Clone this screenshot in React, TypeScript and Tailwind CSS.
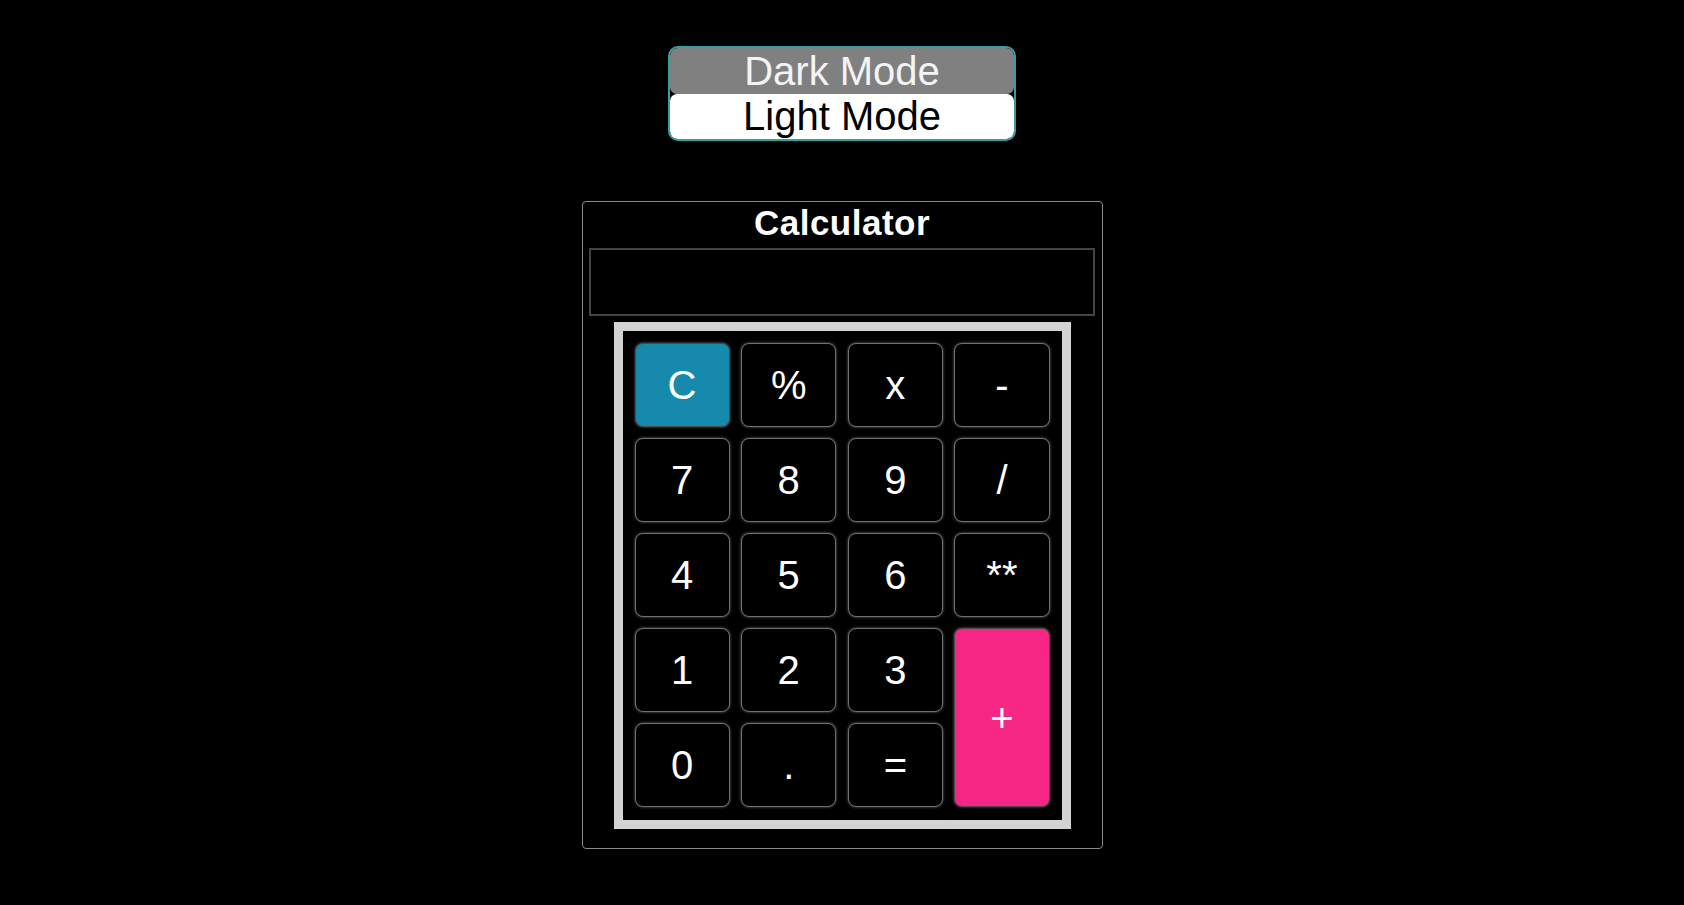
import React from "react";

// Keypad layout, row by row. "+" spans two rows in the last column.
const keys = [
  { label: "C", variant: "clear" },
  { label: "%" },
  { label: "x" },
  { label: "-" },
  { label: "7" },
  { label: "8" },
  { label: "9" },
  { label: "/" },
  { label: "4" },
  { label: "5" },
  { label: "6" },
  { label: "**" },
  { label: "1" },
  { label: "2" },
  { label: "3" },
  { label: "+", variant: "plus" },
  { label: "0" },
  { label: "." },
  { label: "=" },
];

function Key({ label, variant }: { label: string; variant?: string }) {
  const base =
    "flex items-center justify-center rounded-[8px] border-[1.5px] text-[40px] leading-none text-white shadow-[0_0_3px_rgba(170,170,170,0.6)]";
  let color = "bg-black border-[#707070]";
  if (variant === "clear") color = "bg-[#168aad] border-[#4a4a4a]";
  if (variant === "plus") color = "bg-[#f72585] border-[#4a4a4a] row-span-2";
  return <button className={`${base} ${color}`}>{label}</button>;
}

export default function App() {
  return (
    <div
      className="min-h-[905px] bg-black flex flex-col items-center pt-[46px]"
      style={{ fontFamily: '"Liberation Sans", Arial, sans-serif' }}
    >
      {/* theme toggle */}
      <div className="w-[348px] h-[95px] border-2 border-[#34a0a4] rounded-[10px] bg-black flex flex-col overflow-hidden">
        <button className="h-[45.5px] rounded-[7px] bg-[#808080] text-[#f4f4f4] text-[40px] leading-none flex items-center justify-center">
          Dark Mode
        </button>
        <button className="h-[45.5px] rounded-[7px] bg-white text-black text-[40px] leading-none flex items-center justify-center">
          Light Mode
        </button>
      </div>

      {/* calculator */}
      <div className="mt-[60px] w-[521px] h-[648px] border-[1.5px] border-[#8a8a8a] rounded-[4px] flex flex-col items-center">
        <h1 className="mt-[1px] text-[35px] leading-[39px] font-bold tracking-[0.5px] text-white">
          Calculator
        </h1>
        <div className="mt-[6px] w-[506px] h-[68px] border-2 border-[#444444] bg-black" />
        <div className="mt-[5.5px] w-[457px] h-[507px] border-[9px] border-[#d3d3d3] bg-black grid grid-cols-4 grid-rows-5 gap-x-[11.5px] gap-y-[11px] p-[12px]">
          {keys.map((k) => (
            <Key key={k.label} label={k.label} variant={k.variant} />
          ))}
        </div>
      </div>
    </div>
  );
}
